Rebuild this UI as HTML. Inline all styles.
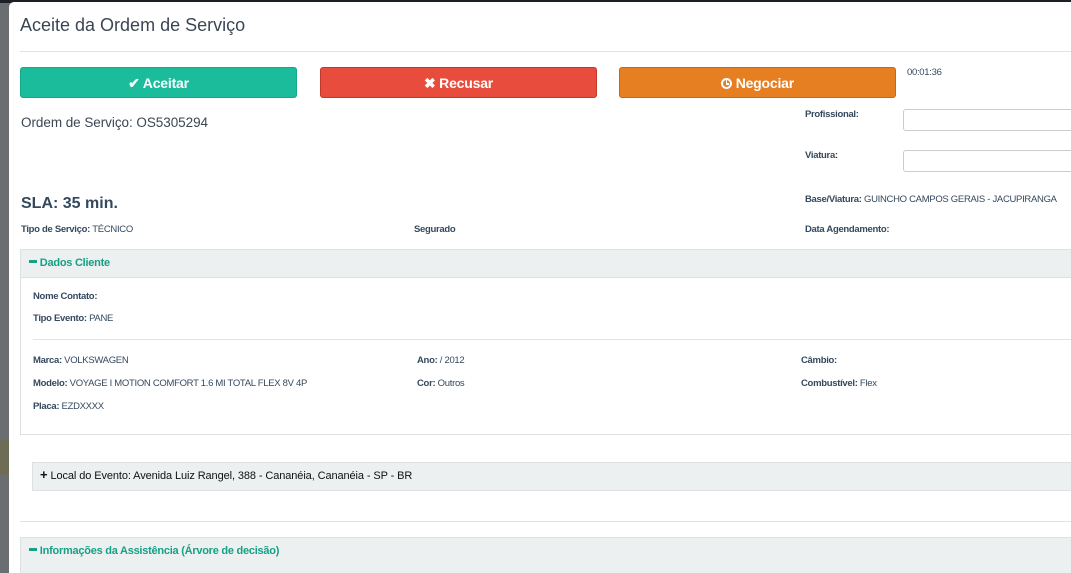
<!DOCTYPE html>
<html><head><meta charset="utf-8"><style>
*{margin:0;padding:0;box-sizing:border-box}
html,body{width:1071px;height:573px;overflow:hidden}
body{background:#5a5f63;font-family:"Liberation Sans",sans-serif;color:#34495e;position:relative}
.a{position:absolute;white-space:nowrap}
#bg1{left:0;top:0;width:12px;height:573px;background:#6b6e70}
#bgtop{left:0;top:0;width:1071px;height:3px;background:#1b2026}
#m{left:9px;top:2px;width:1062px;height:571px;background:#fff;border-radius:5px 0 0 0}
.btn{position:absolute;top:67px;height:31px;width:277px;border-radius:3px;color:#fff;font-weight:bold;font-size:14px;text-align:center;line-height:30px;letter-spacing:-0.2px}
.l{font-size:9.5px;font-weight:bold;color:#34495e;letter-spacing:-0.3px}
.l span{font-weight:normal}
.hr{position:absolute;height:1px;background:#e3e3e3}
.ph{position:absolute;background:#ecf0f1;border:1px solid #dde1e2}
.g{color:#16a085;font-weight:bold;font-size:11px;letter-spacing:-0.25px}
.inp{position:absolute;left:903px;width:200px;height:22px;border:1px solid #ccc;border-radius:3px;background:#fff}
</style></head><body>
<div class="a" id="bg1"></div>
<div class="a" id="bgtop"></div>
<div class="a" style="left:0;top:440px;width:9px;height:35px;background:#6e6c56"></div>
<div class="a" id="m"></div>
<div class="a" style="left:20px;top:15px;font-size:18px;color:#3b4654">Aceite da Ordem de Serviço</div>
<div class="hr" style="left:20px;top:51px;width:1060px"></div>
<div class="btn" style="left:20px;background:#1abc9c;border:1px solid #17a689">✔ Aceitar</div>
<div class="btn" style="left:320px;background:#e74c3c;border:1px solid #c0392b">✖ Recusar</div>
<div class="btn" style="left:619px;background:#e67e22;border:1px solid #c8671a"><span style="display:inline-block;width:11px;height:11px;border:2px solid #fff;border-radius:50%;vertical-align:-1px;position:relative"><span style="position:absolute;left:2.5px;top:0;width:1.5px;height:4px;background:#fff"></span><span style="position:absolute;left:2.5px;top:3px;width:3px;height:1.5px;background:#fff"></span></span> Negociar</div>
<div class="a" style="left:907px;top:67px;font-size:9.5px;letter-spacing:-0.3px">00:01:36</div>
<div class="a" style="left:21px;top:115px;font-size:13.5px;color:#3b4654;letter-spacing:-0.05px">Ordem de Serviço: OS5305294</div>
<div class="a l" style="left:805px;top:109px">Profissional:</div>
<div class="inp" style="top:109px"></div>
<div class="a l" style="left:805px;top:150px">Viatura:</div>
<div class="inp" style="top:150px"></div>
<div class="a" style="left:21px;top:195px;font-size:16px;font-weight:bold;color:#34495e">SLA: 35 min.</div>
<div class="a l" style="left:805px;top:194px">Base/Viatura: <span>GUINCHO CAMPOS GERAIS - JACUPIRANGA</span></div>
<div class="a l" style="left:21px;top:224px">Tipo de Serviço: <span>TÉCNICO</span></div>
<div class="a l" style="left:414px;top:224px">Segurado</div>
<div class="a l" style="left:805px;top:224px">Data Agendamento:</div>
<div class="a" style="left:20px;top:249px;width:1060px;height:186px;border:1px solid #dde1e2"></div>
<div class="ph" style="left:20px;top:249px;width:1060px;height:29px"></div>
<div class="a g" style="left:29px;top:257px"><span style="display:inline-block;width:8px;height:3px;background:#16a085;vertical-align:3px"></span> Dados Cliente</div>
<div class="a l" style="left:33px;top:291px">Nome Contato:</div>
<div class="a l" style="left:33px;top:313px">Tipo Evento: <span>PANE</span></div>
<div class="hr" style="left:33px;top:339px;width:1040px"></div>
<div class="a l" style="left:33px;top:355px">Marca: <span>VOLKSWAGEN</span></div>
<div class="a l" style="left:33px;top:378px">Modelo: <span>VOYAGE I MOTION COMFORT 1.6 MI TOTAL FLEX 8V 4P</span></div>
<div class="a l" style="left:33px;top:401px">Placa: <span>EZDXXXX</span></div>
<div class="a l" style="left:417px;top:355px">Ano: <span>/ 2012</span></div>
<div class="a l" style="left:417px;top:378px">Cor: <span>Outros</span></div>
<div class="a l" style="left:801px;top:355px">Câmbio:</div>
<div class="a l" style="left:801px;top:378px">Combustível: <span>Flex</span></div>
<div class="ph" style="left:32px;top:462px;width:1050px;height:29px"></div>
<div class="a" style="left:40px;top:470px;font-size:11px;color:#111;letter-spacing:-0.1px"><b style="font-size:13px;line-height:10px">+</b> Local do Evento: Avenida Luiz Rangel, 388 - Cananéia, Cananéia - SP - BR</div>
<div class="hr" style="left:20px;top:521px;width:1060px"></div>
<div class="ph" style="left:20px;top:537px;width:1060px;height:40px"></div>
<div class="a g" style="left:29px;top:545px"><span style="display:inline-block;width:8px;height:3px;background:#16a085;vertical-align:3px"></span> Informações da Assistência (Árvore de decisão)</div>
</body></html>
